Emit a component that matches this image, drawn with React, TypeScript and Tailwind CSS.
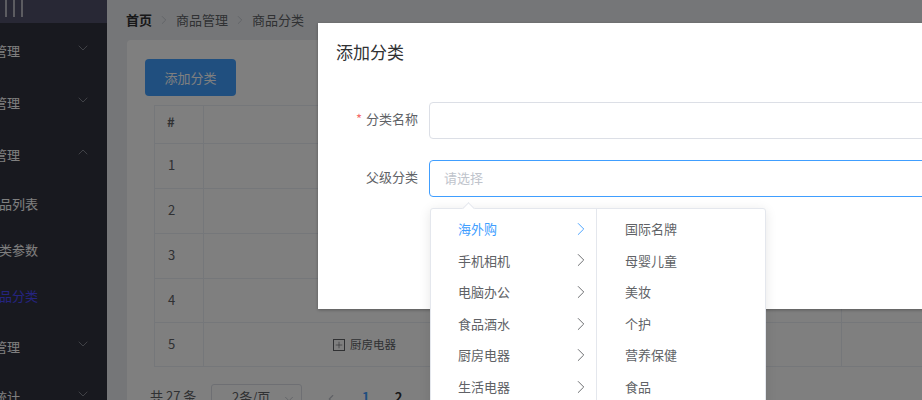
import { ChevronDown, ChevronLeft, ChevronRight, ChevronUp, Plus } from 'lucide-react';

const subMenu = ['商品列表', '分类参数', '商品分类'];
const parents = ['海外购', '手机相机', '电脑办公', '食品酒水', '厨房电器', '生活电器'];
const children = ['国际名牌', '母婴儿童', '美妆', '个护', '营养保健', '食品'];

function MenuItem({ label, open, height }: { label: string; open?: boolean; height: string }) {
  return (
    <div className={`flex items-center justify-between pr-[16px] ${height}`}>
      <span className="-ml-[32px] w-[52px] shrink-0 text-[13px] text-white">{label}</span>
      {open ? (
        <ChevronUp className="-mt-[7px] w-[16px] h-[16px] text-[#8f939c]" strokeWidth={1.25} />
      ) : (
        <ChevronDown className="-mt-[7px] w-[16px] h-[16px] text-[#8f939c]" strokeWidth={1.25} />
      )}
    </div>
  );
}

function Sidebar() {
  return (
    <aside className="w-[107px] shrink-0 h-full bg-[#31323e] overflow-hidden">
      <div className="h-[23px] bg-[#50506a] flex items-start justify-start pl-[5px] gap-[6px]">
        <span className="w-[2px] h-[17px] bg-white/60" />
        <span className="w-[2px] h-[17px] bg-white/60" />
        <span className="w-[2px] h-[17px] bg-white/60" />
      </div>
      <div className="pt-[2px]">
        <MenuItem label="用户管理" height="h-[52px]" />
        <MenuItem label="权限管理" height="h-[52px]" />
        <MenuItem label="商品管理" open height="h-[52px]" />
        {subMenu.map((item, i) => (
          <div key={item} className="h-[46px] flex items-center">
            <span className={`-ml-[14px] text-[13px] ${i === 2 ? 'text-[#4a48ff]' : 'text-white'}`}>{item}</span>
          </div>
        ))}
        <MenuItem label="订单管理" height="h-[56px]" />
        <MenuItem label="数据统计" height="h-[44px]" />
      </div>
    </aside>
  );
}

function CategoryTable() {
  const rows = [1, 2, 3, 4, 5];
  const heights = ['h-[45px]', 'h-[45px]', 'h-[45px]', 'h-[44px]', 'h-[44px]'];
  return (
    <table className="ml-[9px] mt-[9px] w-[900px] table-fixed border-collapse text-[13px] text-[#606266]">
      <colgroup>
        <col className="w-[49px]" />
        <col className="w-[638px]" />
        <col />
      </colgroup>
      <tbody>
        <tr className="h-[38px]">
          <td className="border border-[#ebeef5] pl-[12px] pb-[5px] font-bold text-[#606266]">#</td>
          <td className="border border-[#ebeef5]" />
          <td className="border border-[#ebeef5]" />
        </tr>
        {rows.map((n, i) => (
          <tr key={n} className={heights[i]}>
            <td className="border border-[#ebeef5] pl-[13px] pb-[2px]">{n}</td>
            <td className="border border-[#ebeef5] pl-[129px]">
              {n === 5 && (
                <div className="flex items-center gap-[5px]">
                  <span className="w-[12px] h-[12px] border border-[#606266] flex items-center justify-center">
                    <Plus className="w-[10px] h-[10px]" strokeWidth={1.5} />
                  </span>
                  <span className="text-[11.5px]">厨房电器</span>
                </div>
              )}
            </td>
            <td className="border border-[#ebeef5]" />
          </tr>
        ))}
      </tbody>
    </table>
  );
}

function Pagination() {
  return (
    <div className="mt-[17px] ml-[5px] flex items-center text-[13px] text-[#606266]">
      <span className="w-[61px] pb-[6px]">共 27 条</span>
      <div className="w-[91px] h-[30px] border border-[#dcdfe6] rounded-[3px] flex items-center justify-between pl-[20px] pr-[5px]">
        <span className="text-[#606266] pb-[4px]">2条/页</span>
        <ChevronDown className="w-[14px] h-[14px] text-[#c0c4cc]" strokeWidth={1.5} />
      </div>
      <ChevronLeft className="ml-[22px] w-[14px] h-[14px] text-[#c0c4cc]" strokeWidth={2} />
      <span className="ml-[24px] pb-[4px] font-bold text-[#409eff]">1</span>
      <span className="ml-[25px] pb-[4px] font-bold text-[#303133]">2</span>
    </div>
  );
}

function AddDialog() {
  return (
    <div className="absolute left-[318px] top-[23px] w-[720px] h-[286px] bg-white shadow-[0_1px_3px_rgba(0,0,0,0.3)]">
      <div className="pl-[18px] pt-[17px] text-[17px] leading-[24px] text-[#303133]">添加分类</div>
      <div className="mt-[38px] flex items-center h-[37px]">
        <label className="w-[111px] shrink-0 text-right pr-[11px] pb-[3px] text-[13px] text-[#606266]">
          <span className="text-[#f56c6c] mr-[4px]">*</span>分类名称
        </label>
        <div className="w-full h-[37px] border border-[#dcdfe6] rounded-[4px]" />
      </div>
      <div className="mt-[21px] flex items-center h-[37px]">
        <label className="w-[111px] shrink-0 text-right pr-[11px] pb-[3px] text-[13px] text-[#606266]">父级分类</label>
        <div className="w-full h-[37px] border border-[#409eff] rounded-[4px] flex items-center pl-[14px] pb-[2px] text-[13px] text-[#c0c4cc]">
          请选择
        </div>
      </div>
    </div>
  );
}

function CascaderPanel() {
  return (
    <div className="absolute left-[430px] top-[208px] w-[336px] h-[230px] bg-white border border-[#e4e7ed] rounded-[3px] shadow-[0_2px_12px_rgba(0,0,0,0.1)] flex text-[13px] text-[#606266]">
      <span className="absolute left-[33px] -top-[5px] w-[9px] h-[9px] rotate-45 bg-white border-l border-t border-[#e4e7ed]" />
      <ul className="w-[166px] border-r border-[#e4e7ed] pt-[4px]">
        {parents.map((item, i) => (
          <li key={item} className={`h-[31.6px] flex items-center justify-between pl-[27px] pr-[4px] ${i === 0 ? 'text-[#409eff]' : ''}`}>
            <span>{item}</span>
            <ChevronRight className="w-[22px] h-[22px]" strokeWidth={1} />
          </li>
        ))}
      </ul>
      <ul className="flex-1 pt-[4px]">
        {children.map((item) => (
          <li key={item} className="h-[31.6px] flex items-center pl-[28px]">{item}</li>
        ))}
      </ul>
    </div>
  );
}

export default function App() {
  return (
    <div className="relative w-[922px] h-[400px] overflow-hidden flex font-['Noto_Sans_CJK_SC','Noto_Sans',sans-serif] bg-[#eaedf1]">
      <Sidebar />
      <main className="flex-1 min-w-0 pl-[20px]">
        <nav className="h-[40px] flex items-center text-[13px]">
          <span className="-ml-[1px] font-bold text-[#303133]">首页</span>
          <ChevronRight className="mx-[5px] w-[14px] h-[14px] text-[#c0c4cc]" strokeWidth={1.5} />
          <span className="text-[#606266]">商品管理</span>
          <ChevronRight className="mx-[5px] w-[14px] h-[14px] text-[#c0c4cc]" strokeWidth={1.5} />
          <span className="text-[#606266]">商品分类</span>
        </nav>
        <section className="w-[900px] h-[400px] bg-white rounded-[4px] pl-[18px] pt-[19px]">
          <button className="block w-[91px] h-[37px] rounded-[4px] bg-[#409eff] text-[13px] text-white">添加分类</button>
          <CategoryTable />
          <Pagination />
        </section>
      </main>
      <div className="absolute inset-0 bg-black/50" />
      <AddDialog />
      <CascaderPanel />
    </div>
  );
}
